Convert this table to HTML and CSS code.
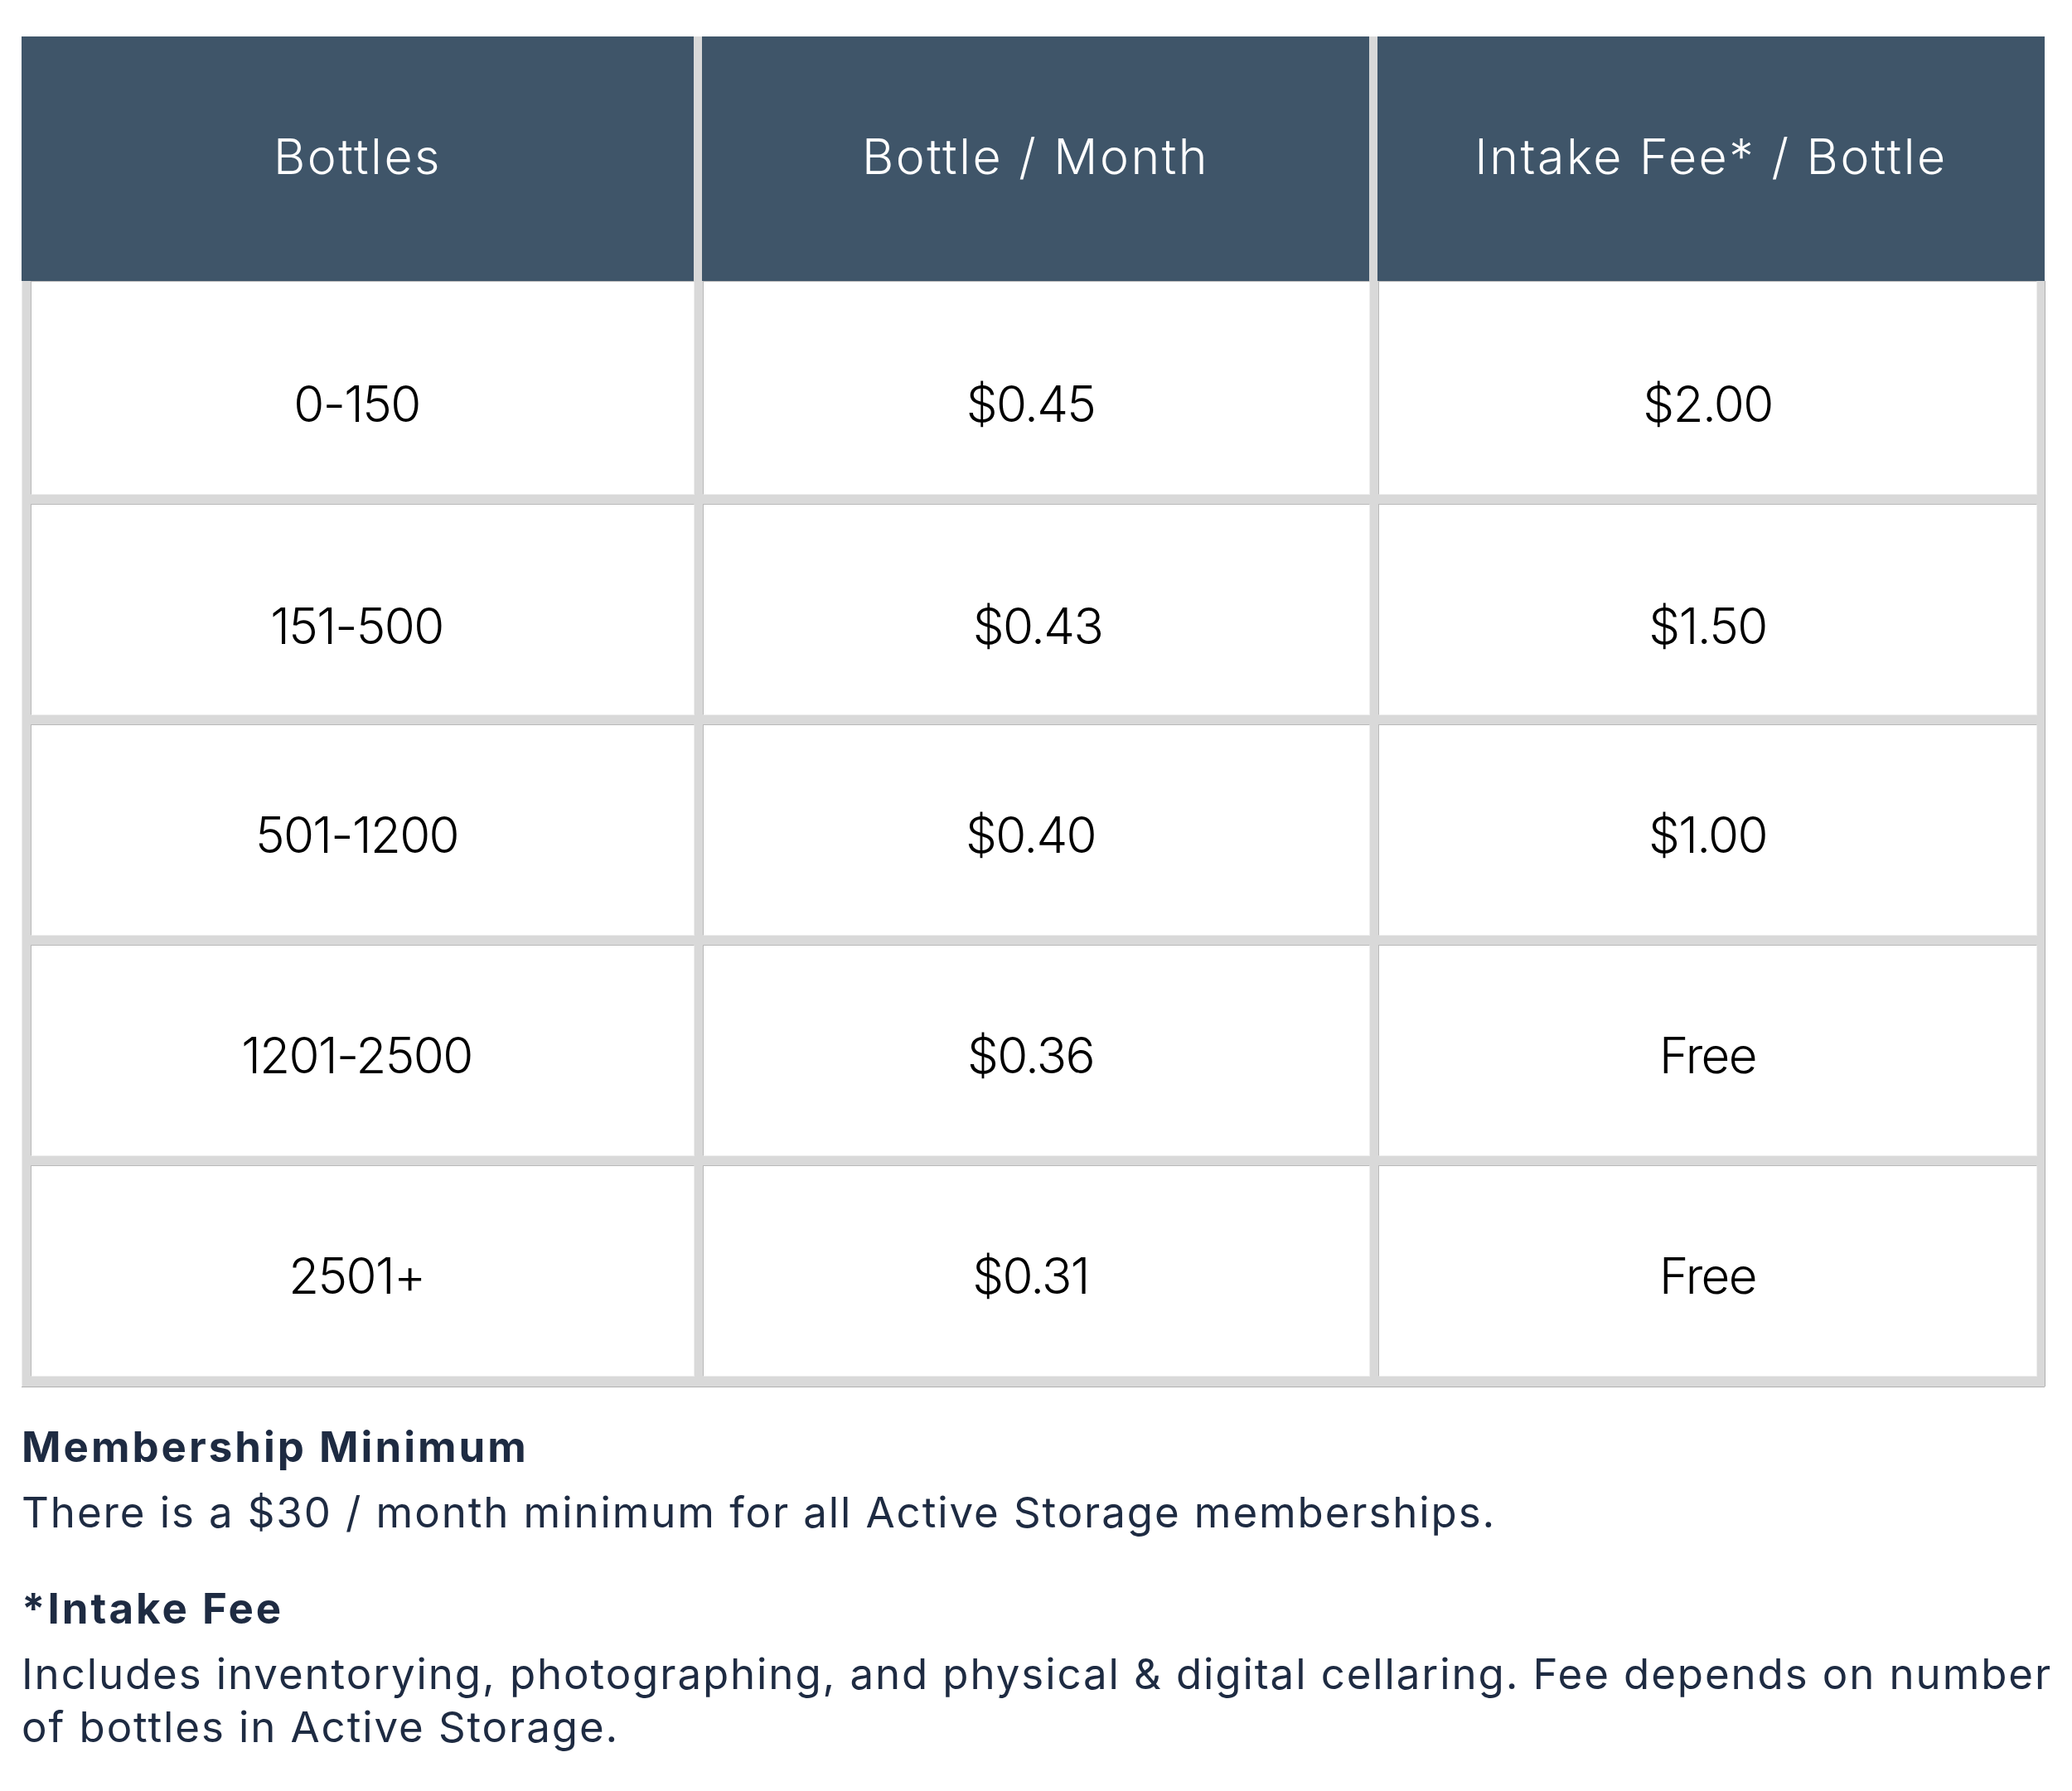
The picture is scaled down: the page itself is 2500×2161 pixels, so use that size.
FILE: index.html
```html
<!DOCTYPE html>
<html lang="en">
<head>
<meta charset="utf-8">
<title>Active Storage Pricing</title>
<link rel="stylesheet" href="styles.css">
</head>
<body>
<main class="page">
  <div class="pricing">
    <div class="thead">
      <div class="th">Bottles</div>
      <div class="th">Bottle / Month</div>
      <div class="th">Intake Fee* / Bottle</div>
    </div>
    <div class="row first">
      <div class="td">0-150</div>
      <div class="td">$0.45</div>
      <div class="td">$2.00</div>
    </div>
    <div class="row">
      <div class="td">151-500</div>
      <div class="td shift">$0.43</div>
      <div class="td">$1.50</div>
    </div>
    <div class="row tight">
      <div class="td">501-1200</div>
      <div class="td">$0.40</div>
      <div class="td">$1.00</div>
    </div>
    <div class="row tight">
      <div class="td">1201-2500</div>
      <div class="td">$0.36</div>
      <div class="td">Free</div>
    </div>
    <div class="row tight last">
      <div class="td">2501+</div>
      <div class="td">$0.31</div>
      <div class="td">Free</div>
    </div>
  </div>

  <section class="notes">
    <h3 class="note-title">Membership Minimum</h3>
    <p class="note-text">There is a $30 / month minimum for all Active Storage memberships.</p>
    <h3 class="note-title">*Intake Fee</h3>
    <p class="note-text">Includes inventorying, photographing, and physical &amp; digital cellaring. Fee depends on number of bottles in Active Storage.</p>
  </section>
</main>
</body>
</html>
```
FILE: styles.css
```css
html, body {
  margin: 0;
  padding: 0;
  background: #ffffff;
}

.page {
  padding: 44px 0 0 26px;
  font-family: Inter, "Open Sans", "Liberation Sans", sans-serif;
}

.pricing {
  width: 2441px;
  background: #d9d9d9;
  border-bottom: 1px solid #b0b0b0;
}

.thead {
  display: grid;
  grid-template-columns: 811px 805px 805px;
  column-gap: 10px;
  height: 295px;
  background: #d9d9d9;
}

.th {
  box-sizing: border-box;
  background: #3f5569;
  color: #ffffff;
  font-weight: 300;
  font-size: 59px;
  display: flex;
  align-items: center;
  justify-content: center;
  letter-spacing: 2.5px;
  padding-bottom: 6px;
}

.row {
  display: grid;
  grid-template-columns: 801px 805px 795px;
  column-gap: 10px;
  padding: 0 10px 11px 10px;
  border-left: 1px solid #ececec;
  border-right: 1px solid #b0b0b0;
  margin-right: -1px;
}

.td {
  box-sizing: border-box;
  height: 255px;
  background: #ffffff;
  border-top: 1px solid #b9b9b9;
  border-left: 1px solid #b9b9b9;
  border-bottom: 1px solid #ededed;
  border-right: 1px solid #ededed;
  color: #000000;
  font-size: 60px;
  font-weight: 350;
  letter-spacing: -1.6px;
  display: flex;
  align-items: center;
  justify-content: center;
  padding-top: 38px;
  padding-right: 14px;
}

.td:last-child {
  padding-right: 0;
}

.row.first .td {
  height: 258px;
}

.row.tight .td {
  padding-top: 10px;
}

.row.last {
  padding-bottom: 12px;
}

.td.shift {
  padding-left: 17px;
}

.notes {
  width: 2474px;
  margin-top: 40px;
  color: #1e2b42;
}

.note-title {
  margin: 0 0 15px 0;
  font-size: 51px;
  line-height: 64px;
  font-weight: 700;
  letter-spacing: 3px;
}

.note-text {
  margin: 0 0 52px 0;
  font-size: 51px;
  line-height: 64px;
  font-weight: 400;
  letter-spacing: 1.9px;
}
```
